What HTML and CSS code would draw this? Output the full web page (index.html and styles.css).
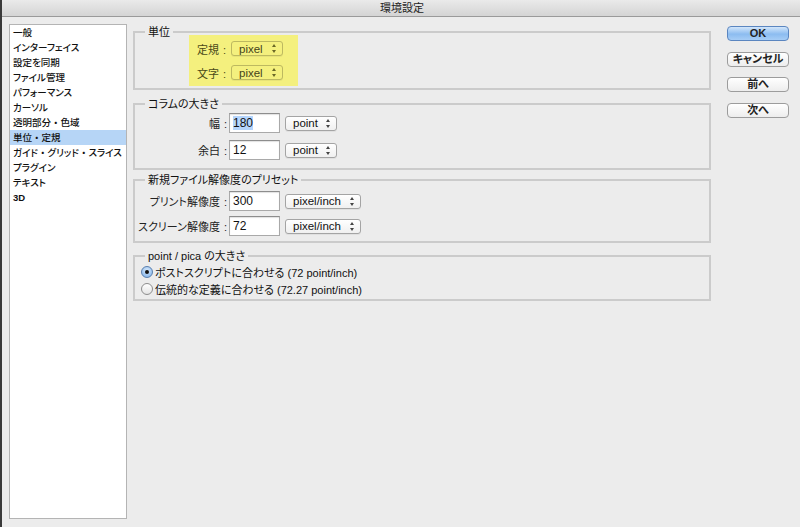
FILE: index.html
```html
<!DOCTYPE html>
<html lang="ja">
<head>
<meta charset="utf-8">
<title>環境設定</title>
<link rel="stylesheet" href="styles.css">
</head>
<body>
<div class="window">
  <div class="titlebar">環境設定</div>
  <div class="body">
    <ul class="sidebar">
      <li>一般</li>
      <li>インターフェイス</li>
      <li>設定を同期</li>
      <li>ファイル管理</li>
      <li>パフォーマンス</li>
      <li>カーソル</li>
      <li>透明部分<span class="dot">・</span>色域</li>
      <li class="active">単位<span class="dot">・</span>定規</li>
      <li>ガイド<span class="dot">・</span>グリッド<span class="dot">・</span>スライス</li>
      <li>プラグイン</li>
      <li>テキスト</li>
      <li class="latin">3D</li>
    </ul>
    <div class="main">
      <fieldset class="group g1">
        <legend>単位</legend>
        <div class="yellow">
          <div class="row">
            <span class="label l1">定規<span class="colon">:</span></span>
            <div class="select s1"><span>pixel</span><i class="arrows"></i></div>
          </div>
          <div class="row">
            <span class="label l1">文字<span class="colon">:</span></span>
            <div class="select s1"><span>pixel</span><i class="arrows"></i></div>
          </div>
        </div>
      </fieldset>
      <fieldset class="group g2">
        <legend>コラムの大きさ</legend>
        <div class="row">
          <span class="label lw">幅<span class="colon">:</span></span>
          <div class="input"><span class="sel">180</span></div>
          <div class="select s2"><span>point</span><i class="arrows"></i></div>
        </div>
        <div class="row r2">
          <span class="label lw">余白<span class="colon">:</span></span>
          <div class="input">12</div>
          <div class="select s2"><span>point</span><i class="arrows"></i></div>
        </div>
      </fieldset>
      <fieldset class="group g3">
        <legend>新規ファイル解像度のプリセット</legend>
        <div class="row">
          <span class="label lw">プリント解像度<span class="colon">:</span></span>
          <div class="input">300</div>
          <div class="select s3"><span>pixel/inch</span><i class="arrows"></i></div>
        </div>
        <div class="row r3">
          <span class="label lw">スクリーン解像度<span class="colon">:</span></span>
          <div class="input">72</div>
          <div class="select s3"><span>pixel/inch</span><i class="arrows"></i></div>
        </div>
      </fieldset>
      <fieldset class="group g4">
        <legend>point / pica の大きさ</legend>
        <div class="radio-row"><span class="radio checked"></span>ポストスクリプトに合わせる (72 point/inch)</div>
        <div class="radio-row"><span class="radio"></span>伝統的な定義に合わせる (72.27 point/inch)</div>
      </fieldset>
    </div>
    <div class="buttons">
      <div class="btn primary">OK</div>
      <div class="btn">キャンセル</div>
      <div class="btn">前へ</div>
      <div class="btn">次へ</div>
    </div>
  </div>
</div>
</body>
</html>
```

FILE: styles.css
```css
* { box-sizing: border-box; }
html, body {
  margin: 0;
  padding: 0;
  width: 800px;
  height: 527px;
  overflow: hidden;
  background: #ececec;
}
body {
  font-family: "Liberation Sans", "Noto Sans CJK JP", sans-serif;
  font-size: 11px;
  color: #111;
}
.window {
  width: 800px;
  height: 527px;
  border-left: 2px solid #3a3a3a;
  background: #ececec;
  display: flex;
  flex-direction: column;
}
.titlebar {
  height: 17px;
  line-height: 16px;
  text-align: center;
  font-size: 11px;
  color: #222;
  background: linear-gradient(#eaeaea, #d4d4d4);
  border-bottom: 1px solid #9a9a9a;
  font-feature-settings: "palt";
  padding-left: 2px;
}
.body {
  display: flex;
  flex: 1;
}
.sidebar {
  list-style: none;
  margin: 7px 0 0 7px;
  padding: 0;
  width: 118px;
  height: 495px;
  background: #fff;
  border: 1px solid #b4b4b4;
  font-size: 9.5px;
  font-weight: 500;
  font-feature-settings: "palt";
}
.sidebar li {
  height: 15px;
  line-height: 15px;
  padding-left: 3px;
  white-space: nowrap;
  color: #111;
}
.sidebar .dot { font-feature-settings: normal; }
.sidebar .latin { font-weight: bold; font-size: 9.5px; }
.sidebar li.active { background: #b6d5f6; }
.main {
  width: 578px;
  margin-left: 6px;
  margin-top: 8px;
  display: flex;
  flex-direction: column;
}
.group {
  margin: 0;
  padding: 0;
  border: 2px solid #cbcbcb;
  min-width: 0;
}
.group legend {
  margin-left: 10px;
  padding: 0 3px;
  line-height: 14px;
  font-size: 11px;
  font-feature-settings: "palt";
}
.g1 { padding-bottom: 2px; }
.g2 { margin-top: 7px; padding-top: 2px; padding-bottom: 8px; }
.g3 { margin-top: 3px; padding-top: 4px; padding-bottom: 5px; }
.g4 { margin-top: 6px; padding-top: 1px; padding-bottom: 2px; }
.yellow {
  margin-top: -4px;
  margin-left: 54px;
  width: 109px;
  height: 51px;
  background: #f4f07e;
  padding-top: 6px;
}
.yellow .row { height: 15px; }
.yellow .row + .row { margin-top: 9px; }
.row {
  display: flex;
  align-items: center;
  height: 20px;
}
.r2 { margin-top: 7px; }
.r3 { margin-top: 5px; }
.label {
  text-align: right;
  font-feature-settings: "palt";
  white-space: nowrap;
  color: #222;
}
.colon { margin-left: 4px; }
.l1 { width: 37px; margin-right: 5px; color: #4a4a18; }
.lw { width: 92px; margin-right: 2px; }
.select {
  height: 15px;
  border: 1px solid #a4a4a4;
  border-radius: 3px;
  background: linear-gradient(#ffffff, #f0f0f0);
  display: flex;
  align-items: center;
  justify-content: space-between;
  padding: 0 5px 0 7px;
  font-size: 11.5px;
  color: #111;
  box-shadow: 0 1px 0 rgba(0,0,0,0.05);
}
.yellow .select {
  background: #f4f07e;
  border-color: #bdb960;
  color: #45441a;
}
.s1 { width: 52px; }
.s2 { width: 52px; margin-left: 5px; }
.s3 { width: 76px; margin-left: 5px; }
.arrows {
  width: 5px;
  height: 9px;
  position: relative;
  display: block;
}
.arrows::before, .arrows::after {
  content: "";
  position: absolute;
  left: 0;
  border-left: 2.5px solid transparent;
  border-right: 2.5px solid transparent;
}
.arrows::before { top: 0; border-bottom: 3px solid #444; }
.arrows::after { bottom: 0; border-top: 3px solid #444; }
.yellow .arrows::before { border-bottom-color: #6a6826; }
.yellow .arrows::after { border-top-color: #6a6826; }
.input {
  width: 51px;
  height: 20px;
  background: #fff;
  border: 1px solid #a9a9a9;
  border-top-color: #8d8d8d;
  box-shadow: inset 0 1px 1px rgba(0,0,0,0.12);
  padding-left: 3px;
  line-height: 18px;
  font-size: 12px;
  color: #111;
}
.sel { background: #b5d5fc; }
.radio-row {
  height: 16px;
  display: flex;
  align-items: center;
  padding-left: 6px;
  font-feature-settings: "palt";
  white-space: nowrap;
}
.radio-row + .radio-row { margin-top: 1px; }
.radio {
  width: 12px;
  height: 12px;
  border-radius: 50%;
  border: 1px solid #8d8d8d;
  background: linear-gradient(#ffffff, #e4e4e4);
  margin-right: 2px;
  position: relative;
  flex: none;
}
.radio.checked {
  border-color: #5a7fae;
  background: radial-gradient(circle at 50% 35%, #d8e9fb, #7aaee8);
}
.radio.checked::after {
  content: "";
  position: absolute;
  width: 4px;
  height: 4px;
  border-radius: 50%;
  background: #111;
  left: 3px;
  top: 3px;
}
.buttons {
  margin-left: 16px;
  margin-top: 9px;
  display: flex;
  flex-direction: column;
  gap: 10.5px;
}
.btn {
  width: 62px;
  height: 15px;
  border: 1px solid #9c9c9c;
  border-radius: 4px;
  background: linear-gradient(#ffffff, #ededed);
  text-align: center;
  line-height: 13px;
  font-size: 11px;
  font-weight: bold;
  color: #222;
  font-feature-settings: "palt";
}
.btn.primary {
  border-color: #5b86c0;
  background: linear-gradient(#d2e6fb, #8cbcf0 55%, #a6cdf6);
}
```
